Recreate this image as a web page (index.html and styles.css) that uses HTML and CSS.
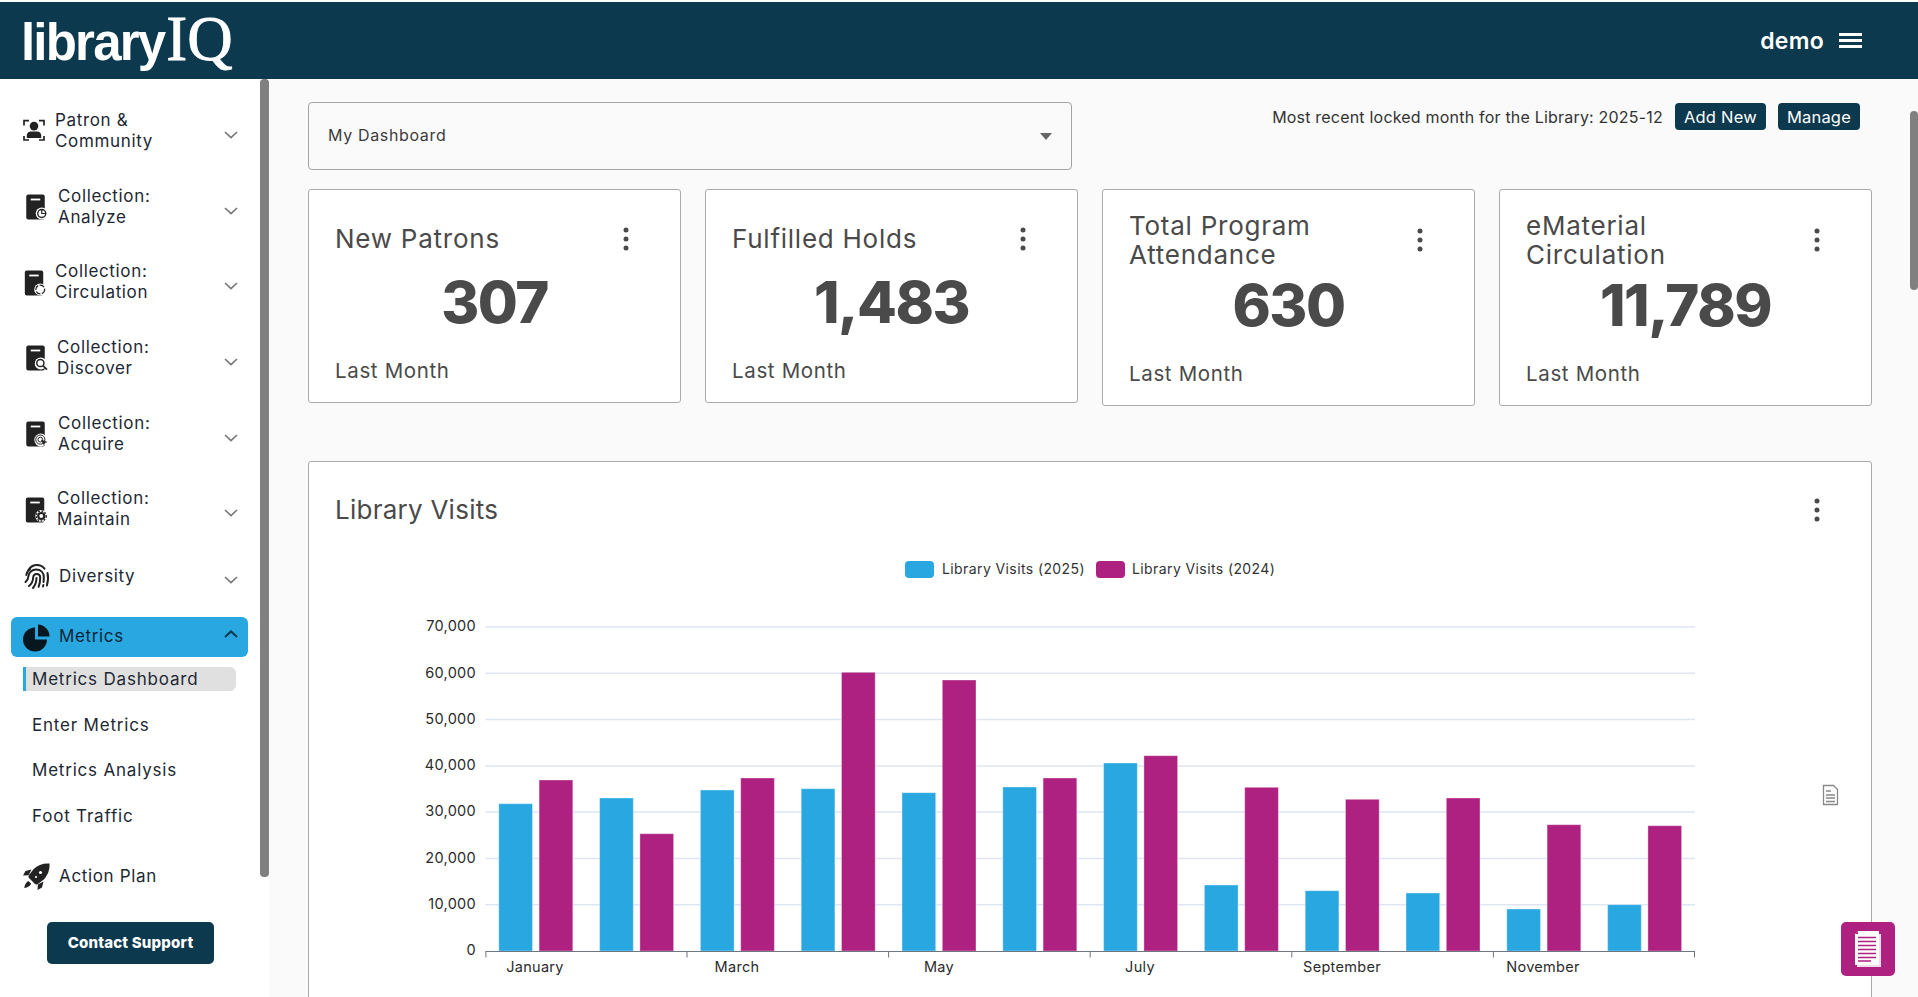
FILE: index.html
```html
<!DOCTYPE html>
<html lang="en">
<head>
<meta charset="utf-8">
<title>LibraryIQ Metrics Dashboard</title>
<link rel="stylesheet" href="styles.css">
</head>
<body>
<header class="topbar">
  <div class="logo"><span class="logo-a">library</span><span class="logo-b">IQ</span></div>
  <div class="user">
    <span class="user-name">demo</span>
    <span class="burger"><i></i><i></i><i></i></span>
  </div>
</header>
<div class="shell">
  <aside class="sidebar">
    <svg width="0" height="0" class="defs">
      <defs>
        <symbol id="book" viewBox="0 0 22 26">
          <path d="M2.5 0.5h14.5a2 2 0 0 1 2 2v21a2 2 0 0 1-2 2h-14.5a2 2 0 0 1-2-2v-21a2 2 0 0 1 2-2z" fill="#222"/>
          <rect x="5" y="4.6" width="9.5" height="1.8" fill="#fff"/>
        </symbol>
      </defs>
    </svg>
    <nav class="nav">
      <div class="nav-row pad-23">
        <svg class="icon w-22" viewBox="0 0 22 24"><path d="M1 7V2.200h5M16 2.200h5V7M1 17.500v4h5M16 21.500h5v-4" fill="none" stroke="#222" stroke-width="1.700"/><circle cx="11" cy="7.600" r="4.300" fill="#222"/><path d="M3.800 19.500v-2.600c0-2.600 2-4 4-4h6.400c2 0 4 1.400 4 4v2.600z" fill="#222"/></svg>
        <span class="nav-label gap-10">Patron &amp;<br>Community</span>
        <svg class="chev" viewBox="0 0 14 8"><path d="M1 1l6 5.600L13 1" /></svg>
      </div>
      <div class="nav-row pad-25">
        <svg class="icon w-22" viewBox="0 0 20.500 25"><use href="#book" width="22" height="26"/><circle cx="16" cy="19.500" r="6" fill="#fff"/><circle cx="16" cy="19.500" r="4" fill="none" stroke="#222" stroke-width="1.400"/><path d="M16 15.500v4h4" fill="none" stroke="#222" stroke-width="1.200"/></svg>
        <span class="nav-label gap-11">Collection:<br>Analyze</span>
        <svg class="chev" viewBox="0 0 14 8"><path d="M1 1l6 5.600L13 1" /></svg>
      </div>
      <div class="nav-row pad-24">
        <svg class="icon w-21" viewBox="0 0 20.500 25"><use href="#book" width="22" height="26"/><circle cx="16" cy="19.500" r="6" fill="#fff"/><circle cx="16" cy="19.500" r="4.400" fill="none" stroke="#222" stroke-width="1.200" stroke-dasharray="5 1.500"/></svg>
        <span class="nav-label gap-10">Collection:<br>Circulation</span>
        <svg class="chev" viewBox="0 0 14 8"><path d="M1 1l6 5.600L13 1" /></svg>
      </div>
      <div class="nav-row pad-25">
        <svg class="icon w-22" viewBox="0 0 20.500 25"><use href="#book" width="22" height="26"/><circle cx="15" cy="18.500" r="6" fill="#fff"/><circle cx="14.600" cy="18" r="3.600" fill="none" stroke="#222" stroke-width="1.500"/><path d="M17.200 20.600l4 4" stroke="#222" stroke-width="1.700"/></svg>
        <span class="nav-label gap-10">Collection:<br>Discover</span>
        <svg class="chev" viewBox="0 0 14 8"><path d="M1 1l6 5.600L13 1" /></svg>
      </div>
      <div class="nav-row pad-25">
        <svg class="icon w-22" viewBox="0 0 20.500 25"><use href="#book" width="22" height="26"/><circle cx="15" cy="19" r="6.400" fill="#fff"/><circle cx="14.600" cy="18.600" r="4.600" fill="none" stroke="#222" stroke-width="1"/><circle cx="14.600" cy="18.600" r="2.400" fill="none" stroke="#222" stroke-width="1"/><path d="M15 18.500l6.800 2.400-2.600 1-1 2.600z" fill="#222"/></svg>
        <span class="nav-label gap-11">Collection:<br>Acquire</span>
        <svg class="chev" viewBox="0 0 14 8"><path d="M1 1l6 5.600L13 1" /></svg>
      </div>
      <div class="nav-row pad-25">
        <svg class="icon w-21" viewBox="0 0 20.500 25"><use href="#book" width="22" height="26"/><circle cx="16" cy="19" r="6" fill="#fff"/><circle cx="16" cy="19" r="3" fill="none" stroke="#222" stroke-width="2.200"/><circle cx="16" cy="19" r="5" fill="none" stroke="#222" stroke-width="1.400" stroke-dasharray="1.800 1.500"/></svg>
        <span class="nav-label gap-11">Collection:<br>Maintain</span>
        <svg class="chev" viewBox="0 0 14 8"><path d="M1 1l6 5.600L13 1" /></svg>
      </div>
      <div class="nav-row nav-row-short pad-23">
        <svg class="icon w-27" viewBox="0 0 26 27" fill="none" stroke="#222" stroke-width="2" stroke-linecap="round"><path d="M5 7c2-3.400 5-5 8.500-5 3 0 5.600 1.300 7.500 3.700"/><path d="M2.800 12c.6-3 2-5 3.900-6.200"/><path d="M2 19c1.800-1.500 2.800-3.500 3-6 .3-3.400 3.400-6.500 7.700-6.500 4.600 0 7.600 3.100 7.600 7.500 0 1.600 0 3.500-.3 5"/><path d="M24 10c.8 3.500.7 8-.6 12.500"/><path d="M5.500 23c2.700-2.200 4-5 4.200-8.500.1-2 1.400-3.600 3.500-3.600 2.300 0 3.500 1.700 3.500 3.900 0 3-.3 6-1.600 9"/><path d="M9.500 25c2.300-2.800 3.400-6 3.500-10"/><path d="M19.500 23.500l.4-1.500"/></svg>
        <span class="nav-label gap-9">Diversity</span>
        <svg class="chev" viewBox="0 0 14 8"><path d="M1 1l6 5.600L13 1" /></svg>
      </div>
      <div class="nav-active">
        <svg class="icon w-27" viewBox="0 0 27 27"><path d="M12 3.500v12h12a12 12 0 1 1-12-12z" fill="#06181f"/><path d="M15 0.500a12 12 0 0 1 11.500 12H15z" fill="#06181f"/></svg>
        <span class="nav-label gap-9">Metrics</span>
        <svg class="chev chev-up" viewBox="0 0 14 8"><path d="M1 7l6-5.600L13 7" /></svg>
      </div>
      <ul class="subnav">
        <li class="sub-item sub-current">Metrics Dashboard</li>
        <li class="sub-item">Enter Metrics</li>
        <li class="sub-item">Metrics Analysis</li>
        <li class="sub-item">Foot Traffic</li>
      </ul>
      <div class="nav-row nav-row-plain pad-23">
        <svg class="icon w-27" viewBox="0 0 27 27"><path d="M26.500 .5c-6.500-.4-12 1.500-15.800 5.500L6 12c-.8 1.200-.7 2.300.3 3.300l5.400 5.400c1 .9 2.100 1 3.300.2l6-4.700C24.500 12.500 26.900 7 26.500 .5z" fill="#222"/><path d="M8.500 6.500L2.500 8 0 12.500l5.500-.3zM20.500 18.500l-1.500 6-4.500 2.500.4-5.500zM5.500 18c-2.200 1-3.600 3.300-4.300 7 3.700-.7 6-2.100 7-4.300z" fill="#222"/><circle cx="17.500" cy="9.500" r="1.600" fill="#fff"/><circle cx="13" cy="14" r="1.100" fill="#fff"/></svg>
        <span class="nav-label gap-9">Action Plan</span>
      </div>
    </nav>
    <button class="support" type="button">Contact Support</button>
    <div class="side-thumb"></div>
  </aside>
  <main class="main">
    <div class="toolbar">
      <div class="select"><span class="select-text">My Dashboard</span><i class="caret"></i></div>
      <div class="locked">
        <span class="locked-text">Most recent locked month for the Library: 2025-12</span>
        <button class="btn" type="button">Add New</button>
        <button class="btn" type="button">Manage</button>
      </div>
    </div>
    <section class="kpis">
      <article class="kpi">
        <div class="kpi-head"><h2 class="card-title">New Patrons</h2><svg class="dots" viewBox="0 0 6 24"><circle cx="3" cy="3" r="2.500"/><circle cx="3" cy="12" r="2.500"/><circle cx="3" cy="21" r="2.500"/></svg></div>
        <div class="kpi-value">307</div>
        <div class="kpi-foot">Last Month</div>
      </article>
      <article class="kpi">
        <div class="kpi-head"><h2 class="card-title">Fulfilled Holds</h2><svg class="dots" viewBox="0 0 6 24"><circle cx="3" cy="3" r="2.500"/><circle cx="3" cy="12" r="2.500"/><circle cx="3" cy="21" r="2.500"/></svg></div>
        <div class="kpi-value">1,483</div>
        <div class="kpi-foot">Last Month</div>
      </article>
      <article class="kpi">
        <div class="kpi-head kpi-head-tall"><h2 class="card-title">Total Program<br>Attendance</h2><svg class="dots" viewBox="0 0 6 24"><circle cx="3" cy="3" r="2.500"/><circle cx="3" cy="12" r="2.500"/><circle cx="3" cy="21" r="2.500"/></svg></div>
        <div class="kpi-value">630</div>
        <div class="kpi-foot">Last Month</div>
      </article>
      <article class="kpi">
        <div class="kpi-head kpi-head-tall"><h2 class="card-title">eMaterial<br>Circulation</h2><svg class="dots" viewBox="0 0 6 24"><circle cx="3" cy="3" r="2.500"/><circle cx="3" cy="12" r="2.500"/><circle cx="3" cy="21" r="2.500"/></svg></div>
        <div class="kpi-value">11,789</div>
        <div class="kpi-foot">Last Month</div>
      </article>
    </section>
    <section class="chart-card">
      <div class="chart-head"><h2 class="card-title chart-title">Library Visits</h2><svg class="dots" viewBox="0 0 6 24"><circle cx="3" cy="3" r="2.500"/><circle cx="3" cy="12" r="2.500"/><circle cx="3" cy="21" r="2.500"/></svg></div>
      <svg class="chart" width="1561" height="447" viewBox="0 0 1561 447">
        <rect class="blue" x="596" y="11" width="29" height="17" rx="4"/>
        <text class="legend" x="633" y="24">Library Visits (2025)</text>
        <rect class="purple" x="787" y="11" width="29" height="17" rx="4"/>
        <text class="legend" x="823" y="24">Library Visits (2024)</text>
        <g class="grid">
          <path d="M176.400 77H1386M176.400 123.300H1386M176.400 169.600H1386M176.400 216H1386M176.400 262H1386M176.400 308.400H1386M176.400 354.700H1386"/>
        </g>
        <g class="ylabels">
          <text x="167" y="81">70,000</text><text x="167" y="128">60,000</text><text x="167" y="174">50,000</text><text x="167" y="220">40,000</text><text x="167" y="266">30,000</text><text x="167" y="313">20,000</text><text x="167" y="359">10,000</text><text x="167" y="405">0</text>
        </g>
        <g class="blue bars">
          <rect x="189.800" y="253.700" width="33.700" height="147.300"/><rect x="290.600" y="248" width="33.700" height="153"/><rect x="391.400" y="240" width="33.700" height="161"/><rect x="492.200" y="238.700" width="33.700" height="162.300"/><rect x="593" y="242.700" width="33.700" height="158.300"/><rect x="693.800" y="237" width="33.700" height="164"/><rect x="794.600" y="213" width="33.700" height="188"/><rect x="895.400" y="335" width="33.700" height="66"/><rect x="996.200" y="340.700" width="33.700" height="60.300"/><rect x="1097" y="343" width="33.700" height="58"/><rect x="1197.800" y="359" width="33.700" height="42"/><rect x="1298.600" y="354.700" width="33.700" height="46.300"/>
        </g>
        <g class="purple bars">
          <rect x="230.100" y="230" width="33.700" height="171"/><rect x="330.900" y="283.700" width="33.700" height="117.300"/><rect x="431.700" y="228" width="33.700" height="173"/><rect x="532.500" y="122.300" width="33.700" height="278.700"/><rect x="633.300" y="130" width="33.700" height="271"/><rect x="734.100" y="228" width="33.700" height="173"/><rect x="834.900" y="205.700" width="33.700" height="195.300"/><rect x="935.700" y="237.300" width="33.700" height="163.700"/><rect x="1036.500" y="249.300" width="33.700" height="151.700"/><rect x="1137.300" y="248" width="33.700" height="153"/><rect x="1238.100" y="274.700" width="33.700" height="126.300"/><rect x="1338.900" y="275.700" width="33.700" height="125.300"/>
        </g>
        <path class="axis" d="M176.400 401.500H1386M176.900 401.500v6M378 401.500v6M579.600 401.500v6M781.200 401.500v6M982.800 401.500v6M1184.400 401.500v6M1385.500 401.500v6"/>
        <g class="xlabels">
          <text x="226" y="422">January</text><text x="428" y="422">March</text><text x="630" y="422">May</text><text x="831" y="422">July</text><text x="1033" y="422">September</text><text x="1234" y="422">November</text>
        </g>
        <g class="export">
          <path d="M1514.500 235.500h10l4 4v15h-14z"/>
          <path d="M1517 241h5M1517 245h9M1517 248h9M1517 251.500h9"/>
        </g>
      </svg>
    </section>
    <div class="main-thumb"></div>
    <button class="notes" type="button" aria-label="Notes">
      <svg viewBox="0 0 26 36" width="26" height="36"><rect x="2" y="3" width="24" height="33" fill="#f3d9ea"/><path d="M3 0h21v34H0V3z" fill="#fff"/><path d="M3 0v3H0z" fill="#ae2181"/><path d="M3 6.500h18M3 10.500h18M3 14.500h18M3 18.500h18M3 22.500h18M3 26.500h18M3 30h13" stroke="#ae2181" stroke-width="1.300"/></svg>
    </button>
  </main>
</div>
</body>
</html>
```

FILE: styles.css
```css
* { box-sizing: border-box; }
html, body { height: 100%; }
body {
  margin: 0;
  padding-top: 2px;
  background: #fff;
  font-family: Inter, "Noto Sans", sans-serif;
  color: #1d2833;
  overflow: hidden;
  display: flex;
  flex-direction: column;
}

/* Top bar */
.topbar {
  flex: 0 0 77px;
  background: #0c394e;
  display: flex;
  align-items: center;
  justify-content: space-between;
  padding: 0 56px 0 21px;
  color: #fff;
}
.logo { display: flex; align-items: baseline; line-height: 1; margin-top: -2px; white-space: nowrap; }
.logo-a {
  font-family: "Liberation Sans", sans-serif;
  font-size: 51px;
  font-weight: 700;
  letter-spacing: -1.800px;
}
.logo-b {
  font-family: "Liberation Serif", serif;
  font-size: 63px;
  -webkit-text-stroke: .8px #fff;
  margin-left: 2px;
}
.user { display: flex; align-items: center; gap: 15px; }
.user-name { font-size: 23px; font-weight: 600; letter-spacing: .3px; }
.burger { display: flex; flex-direction: column; gap: 3px; width: 23px; }
.burger i { display: block; height: 3px; background: #fff; }

/* Layout */
.shell { flex: 1; display: flex; min-height: 0; }
.sidebar {
  flex: 0 0 269px;
  position: relative;
  background: #fff;
  padding-top: 14px;
  overflow: hidden;
}
.defs { position: absolute; }
.side-thumb {
  position: absolute; top: 0; right: 0;
  width: 9px; height: 798px;
  background: #808080;
  border-radius: 4px;
}

/* Nav */
.nav-row {
  height: 75.700px;
  display: flex;
  align-items: center;
  padding-right: 31px;
}
.nav-row-short { height: 58px; }
.nav-row-plain { height: 40px; margin-top: 29px; }
.pad-23 { padding-left: 23px; }
.pad-24 { padding-left: 24px; }
.pad-25 { padding-left: 25px; }
.icon { flex: none; overflow: visible; }
.w-21 { width: 21px; height: 25px; }
.w-22 { width: 22px; height: 25px; }
.w-27 { width: 27px; height: 27px; }
.gap-9 { margin-left: 9px; }
.gap-10 { margin-left: 10px; }
.gap-11 { margin-left: 11px; }
.nav-label { flex: 1; font-size: 17px; line-height: 21px; letter-spacing: .65px; color: #1d2833; }
.chev { flex: none; width: 14px; height: 8px; margin-top: 8px; fill: none; stroke: #777; stroke-width: 1.700; }
.chev-up { margin-top: -6px; stroke: #0c394e; stroke-width: 2; }
.nav-active {
  margin: 12px 21px 0 11px;
  height: 40px;
  border-radius: 6px;
  background: #29a7e0;
  display: flex;
  align-items: center;
  padding: 0 10px 0 12px;
}
.nav-active .nav-label { color: #0c2636; margin-top: -1px; }
.subnav { list-style: none; margin: 10px 33px 0 23px; padding: 0; display: flex; flex-direction: column; gap: 21.600px; }
.sub-item {
  height: 24px;
  line-height: 24px;
  border-left: 3px solid transparent;
  padding-left: 6px;
  font-size: 17px;
  letter-spacing: .8px;
  border-radius: 0 6px 6px 0;
  white-space: nowrap;
}
.sub-current { background: #e0e0e0; border-left-color: #29a7e0; }
.support {
  display: block;
  margin: 25px 0 0 47px;
  width: 167px;
  height: 42px;
  border: 0;
  border-radius: 5px;
  background: #0c394e;
  color: #fff;
  font: 800 15px Inter, sans-serif;
  letter-spacing: .2px;
}

/* Main */
.main {
  flex: 1;
  min-width: 0;
  position: relative;
  background: #fafafa;
  padding: 23px 46px 0 39px;
  overflow: hidden;
}
.toolbar { display: flex; justify-content: space-between; align-items: flex-start; }
.select {
  width: 764px;
  height: 68px;
  border: 1px solid #a3a3a3;
  border-radius: 4px;
  display: flex;
  align-items: center;
  justify-content: space-between;
  padding: 0 19px;
  font-size: 16px;
  color: #3c3c3c;
  letter-spacing: .65px;
}
.select-text { margin-top: -2px; }
.caret { width: 0; height: 0; border: 6px solid transparent; border-top: 7px solid #666; border-bottom: 0; }
.locked { display: flex; align-items: center; gap: 12px; margin: 1px 12px 0 0; }
.locked-text { font-size: 16px; color: #333; letter-spacing: .2px; white-space: nowrap; }
.btn {
  height: 27px;
  padding: 0 9px;
  border: 0;
  border-radius: 4px;
  background: #0c394e;
  color: #fff;
  font: 400 16.500px Inter, sans-serif;
  letter-spacing: .2px;
}

/* KPI cards */
.kpis { display: grid; grid-template-columns: repeat(4, 1fr); gap: 24px; margin-top: 19px; align-items: start; }
.kpi, .chart-card {
  background: #fff;
  border: 1px solid #aaa;
  border-radius: 3px;
}
.kpi { padding: 19px 51px 17px 26px; }
.kpi-head { display: flex; align-items: center; justify-content: space-between; min-height: 59px; }
.kpi-head-tall { min-height: 62px; }
.card-title { margin: 0; font-size: 26px; font-weight: 400; line-height: 29px; color: #4a4a4a; letter-spacing: .75px; }
.chart-title { letter-spacing: .25px; }
.dots { flex: none; width: 6px; height: 24px; fill: #4a4a4a; }
.kpi-value { text-align: center; font-size: 58px; line-height: 68px; font-weight: 800; letter-spacing: -1.500px; color: #4a4a4a; margin-right: -25px; }
.kpi-foot { margin-top: 21px; font-size: 20.500px; line-height: 28px; color: #4a4a4a; letter-spacing: .65px; }

/* Chart */
.chart-card { margin-top: 55px; height: 600px; }
.chart-head { display: flex; align-items: center; justify-content: space-between; padding: 7px 51px 0 26px; height: 88px; }
.chart { display: block; }
.blue { fill: #29a7e0; }
.purple { fill: #ae2181; }
.bars rect { stroke: rgba(255,255,255,.35); stroke-width: 1; }
.legend { font-size: 14px; fill: #333; letter-spacing: .4px; }
.grid path { stroke: #dfe5f3; stroke-width: 1.500; fill: none; }
.ylabels text { font-size: 14.500px; fill: #2b2b2b; text-anchor: end; letter-spacing: .3px; }
.xlabels text { font-size: 14.500px; fill: #2b2b2b; text-anchor: middle; letter-spacing: .3px; }
.axis { stroke: #6f7680; stroke-width: 1; fill: none; }
.export path { fill: none; stroke: #888; stroke-width: 1.300; }

/* Overlays */
.main-thumb {
  position: absolute; top: 32px; right: 0;
  width: 8px; height: 179px;
  background: #808080;
  border-radius: 4px;
}
.notes {
  position: fixed;
  right: 23px; bottom: 21px;
  width: 54px; height: 54px;
  border: 0;
  border-radius: 5px;
  background: #ae2181;
  display: flex;
  align-items: center;
  justify-content: center;
  padding: 0;
}
```
